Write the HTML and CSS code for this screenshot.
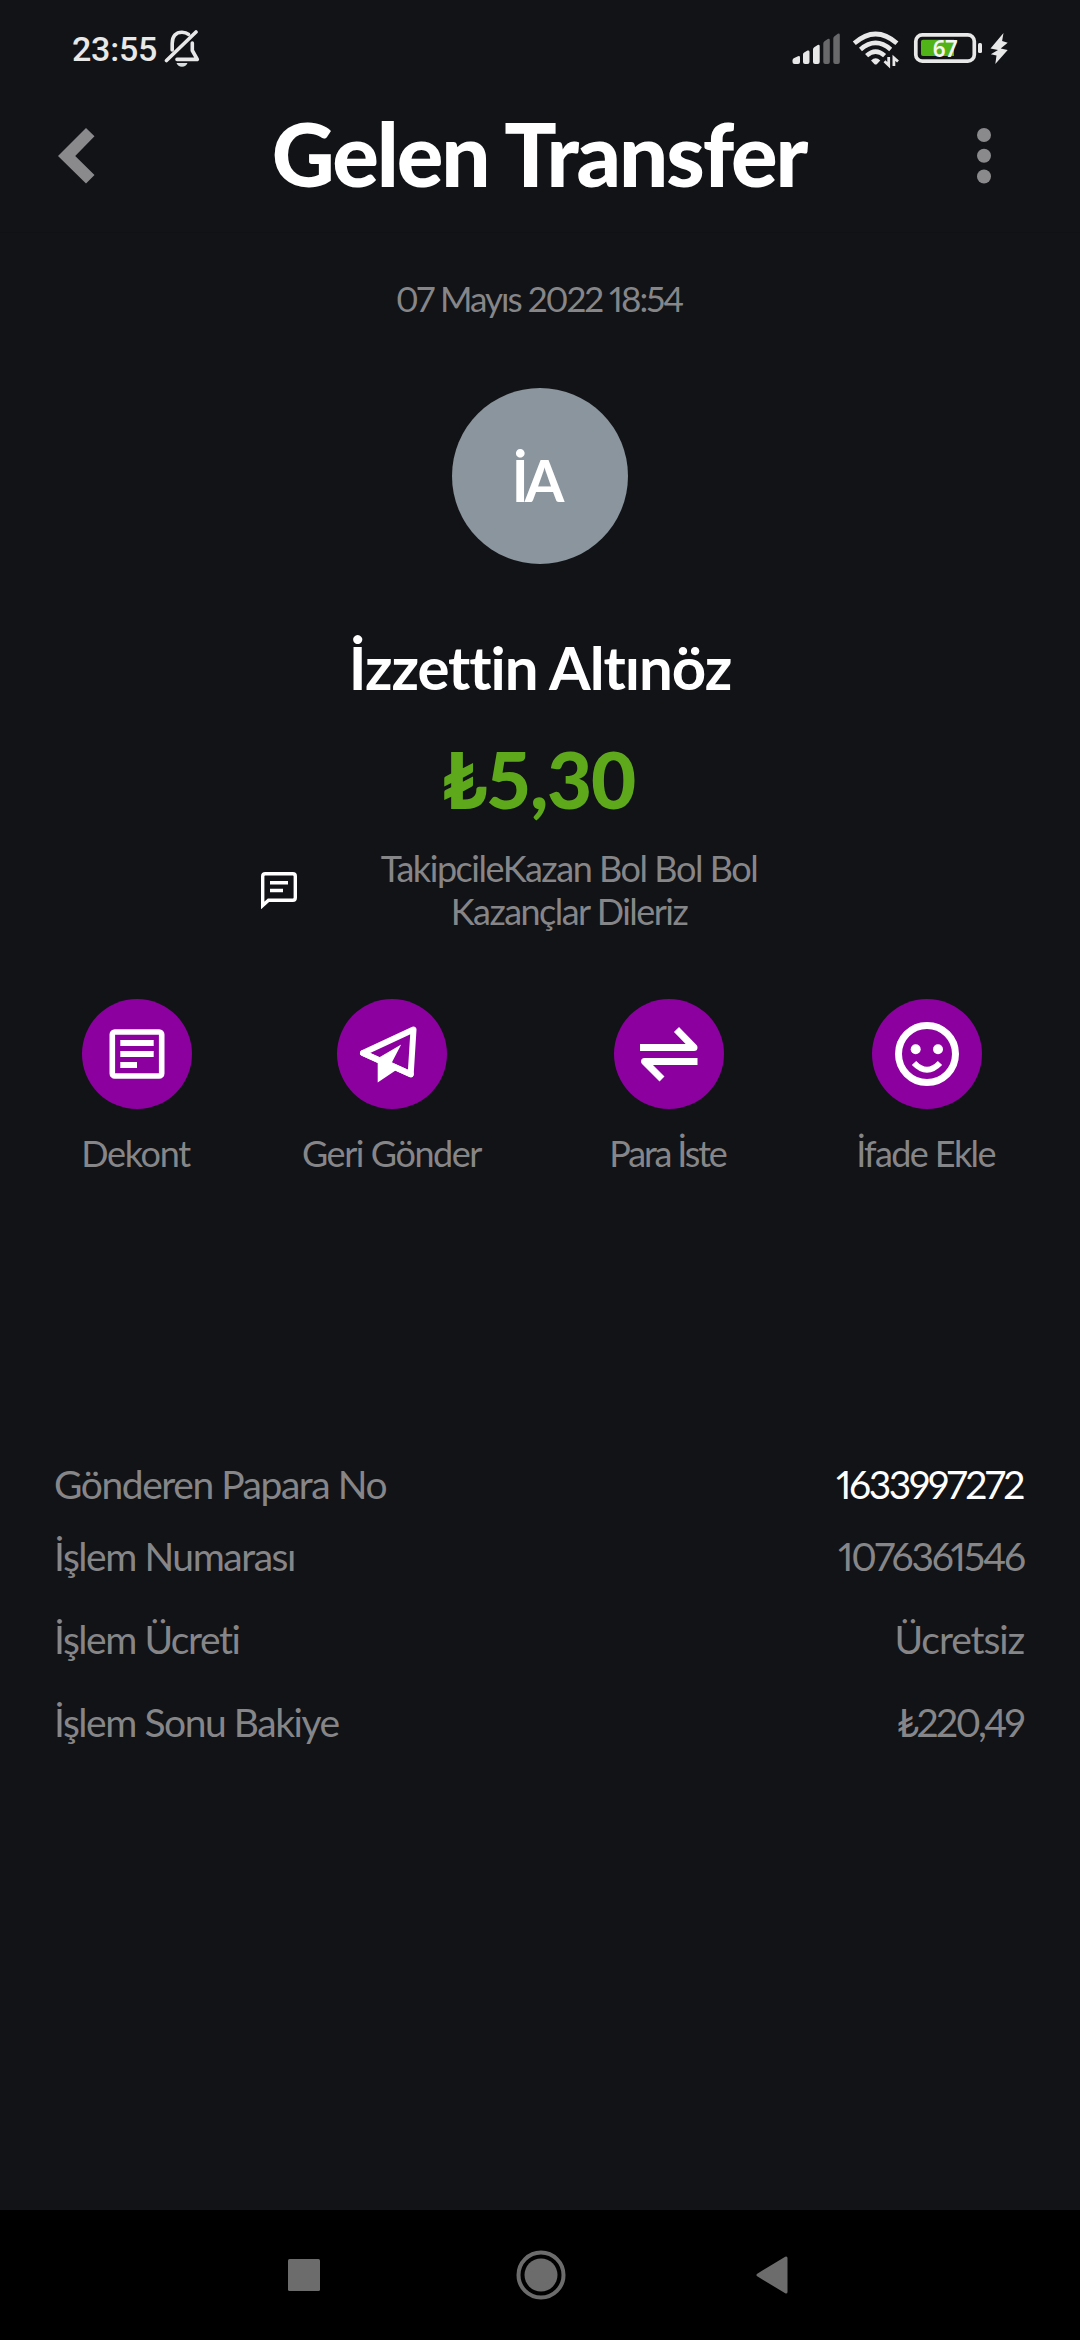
FILE: index.html
```html
<!DOCTYPE html>
<html lang="tr">
<head>
<meta charset="utf-8">
<title>Gelen Transfer</title>
<link rel="stylesheet" href="styles.css">
</head>
<body>
<div class="screen">
  <div class="status">
    <div class="status-left">
      <span class="clock">23:55</span>
      <svg class="bell" width="36" height="40" viewBox="0 0 36 40" fill="none" stroke="#e8e8e8" stroke-width="3.6" stroke-linecap="round">
        <path d="M8.2 21V14.5C8.200 7 12 3.200 18 3.200c2.600 0 4.900.7 6.600 2.200"/>
        <path d="M28.300 14v7.500l5 8.900H13" stroke-linejoin="round"/>
        <path d="M2.500 31.500 32 3"/>
        <path d="M12.500 34h11c-.8 2.400-2.800 3.800-5.500 3.800s-4.700-1.400-5.500-3.800z" fill="#d8dedd" stroke="none"/>
      </svg>
    </div>
    <svg class="status-right" width="220" height="40" viewBox="790 29 220 40">
      <g fill="#e8e8e8">
        <path d="M792.500 60.500q0-1.500 1.200-2.200l4.300-2.100q2-.7 2 1.300v4.500q0 2-2 2h-3.500q-2 0-2-2z"/>
        <path d="M803 54.500q0-1.500 1.200-2l3.300-1.900q2-.7 2 1.300V62q0 2-2 2H805q-2 0-2-2z"/>
        <path d="M813 49.500q0-1.500 1.200-2.200l3.500-2.300q2-.7 2 1.300V62q0 2-2 2H815q-2 0-2-2z"/>
      </g>
      <g fill="#69696b">
        <path d="M823.300 43.500q0-1.500 1.200-2.200l3.300-2.300q2-.7 2 1.300V62q0 2-2 2h-2.500q-2 0-2-2z"/>
        <path d="M833.300 38.500q0-1.500 1.200-2.200l3.300-2.600q2-.7 2 1.300V62q0 2-2 2h-2.500q-2 0-2-2z"/>
      </g>
      <g fill="none" stroke="#e8e8e8" stroke-width="4.600">
        <path d="M854.300 43.300q21.300-18.600 42.600 0"/>
        <path d="M860.500 49.400q15.100-13 30.200 0"/>
        <path d="M866.600 55.600q9-8 18 0"/>
      </g>
      <path d="M871 60.500q4.700-4.500 9.300 0l-3.300 3.600q-1.400 1-2.700 0z" fill="#e8e8e8"/>
      <path d="M884.500 61.200 888.700 65.200V57M898 61.500 893.900 57.800V66" fill="none" stroke="#e8e8e8" stroke-width="2.800"/>
      <rect x="915.800" y="34.800" width="58.500" height="26.400" rx="6.500" fill="none" stroke="#e8e8e8" stroke-width="3.700"/>
      <path d="M923 39.700h31V56h-31q-2 0-2-2V41.700q0-2 2-2z" fill="#50b418"/>
      <rect x="978" y="43" width="4" height="10" rx="1.500" fill="#e8e8e8"/>
      <text class="battery-level" x="945" y="57">67</text>
      <path d="M1003.500 33l-13 15.500 7.500 1.500-7.200 4.200 5.700 1.200-1.200 8.600 12.400-14-7-1.500 7-5.800-5.600-1.700z" fill="#e8e8e8"/>
    </svg>
  </div>

  <div class="header">
    <svg class="back" width="37" height="56" viewBox="0 0 37 56"><path d="M0 28 28 0l8.500 8.300L17.200 28l19.300 19-8.500 8.500z" fill="#8a8a8d"/></svg>
    <h1 class="title">Gelen Transfer</h1>
    <svg class="more" width="14" height="56" viewBox="0 0 14 56" fill="#8a8a8d"><circle cx="7" cy="7" r="7"/><circle cx="7" cy="27.800" r="7"/><circle cx="7" cy="48.500" r="7"/></svg>
  </div>

  <div class="summary">
    <div class="date">07 Mayıs 2022 18:54</div>
    <div class="avatar"><span class="initials">İA</span></div>
    <div class="name">İzzettin Altınöz</div>
    <div class="amount">₺5,30</div>
    <div class="note">
      <svg class="note-icon" width="36" height="37" viewBox="0 0 36 37"><path d="M1.700 33.500V4.200q0-2.500 2.500-2.500h27.600q2.500 0 2.500 2.500v21.600q0 2.500-2.500 2.500H7.500z" fill="none" stroke="#fff" stroke-width="3.400"/><path d="M9 10.700h18M9 18.500h13" stroke="#fff" stroke-width="3.400"/></svg>
      <div class="note-text"><span class="note-a">TakipcileKazan Bol Bol Bol</span><span class="note-b">Kazançlar Dileriz</span></div>
    </div>
  </div>

  <div class="actions">
    <div class="action">
      <div class="disc"><svg width="110" height="110" viewBox="0 0 110 110"><rect x="30.300" y="33" width="49.400" height="44" rx="2.500" fill="none" stroke="#fff" stroke-width="5.600"/><path d="M38.300 44h33.400M38.300 55h33.400M38.300 66h16.700" stroke="#fff" stroke-width="5.800"/></svg></div>
      <span class="label l1">Dekont</span>
    </div>
    <div class="action">
      <div class="disc"><svg width="110" height="110" viewBox="0 0 110 110"><path d="M26 54 76.500 30.500 73.700 75.200z" fill="none" stroke="#fff" stroke-width="6" stroke-linejoin="round"/><path d="M49 70.500 41 63l-2-1 3-2 22-14-9 17.500L67 70z" fill="#8b009f"/><path d="M64.200 45.500 40.700 59.300V83.500L58.500 71.600 54.700 63.700z" fill="#fff"/><path d="M26 54l18 8.200M53 65.800l20.700 9.400" stroke="#fff" stroke-width="6" stroke-linecap="round"/></svg></div>
      <span class="label l2">Geri Gönder</span>
    </div>
    <div class="action">
      <div class="disc"><svg width="110" height="110" viewBox="0 0 110 110" fill="none" stroke="#fff" stroke-width="7" stroke-linejoin="round"><path d="M26 48.500h54L62.500 30.500M83.500 62.500H30.500L48 80"/></svg></div>
      <span class="label l3">Para İste</span>
    </div>
    <div class="action">
      <div class="disc"><svg width="110" height="110" viewBox="0 0 110 110"><circle cx="55" cy="55" r="28.500" fill="none" stroke="#fff" stroke-width="7"/><circle cx="43.700" cy="50.300" r="5" fill="#fff"/><circle cx="66" cy="50.300" r="5" fill="#fff"/><path d="M42 64q13 13.500 26 0" fill="none" stroke="#fff" stroke-width="6"/></svg></div>
      <span class="label l4">İfade Ekle</span>
    </div>
  </div>

  <div class="details">
    <div class="row first"><span>Gönderen Papara No</span><span class="v1">1633997272</span></div>
    <div class="row"><span>İşlem Numarası</span><span class="v2">1076361546</span></div>
    <div class="row"><span>İşlem Ücreti</span><span class="v3">Ücretsiz</span></div>
    <div class="row"><span>İşlem Sonu Bakiye</span><span class="v4">₺220,49</span></div>
  </div>

  <div class="navbar">
    <svg width="32" height="32" viewBox="0 0 32 32"><rect width="32" height="32" rx="1.500" fill="#6c6c6c"/></svg>
    <svg class="home" width="50" height="50" viewBox="0 0 50 50"><circle cx="25" cy="25" r="22.500" fill="none" stroke="#6c6c6c" stroke-width="4"/><circle cx="25" cy="25" r="16.500" fill="#6c6c6c"/></svg>
    <svg width="32" height="38" viewBox="0 0 32 38"><path d="M2 19 30 2v34z" fill="#6c6c6c" stroke="#6c6c6c" stroke-width="3" stroke-linejoin="round"/></svg>
  </div>
</div>
</body>
</html>
```
FILE: styles.css
```css
* { box-sizing: border-box; }
body { margin: 0; background: #121317; font-family: Lato, "Noto Sans", sans-serif; font-variant-ligatures: none; color: #fff; }
svg { display: block; flex: none; }
.screen { width: 1080px; height: 2340px; display: flex; flex-direction: column; white-space: nowrap; }

.status { height: 86px; padding: 29px 70px 0 72px; display: flex; justify-content: space-between; }
.status-left { display: flex; }
.clock { width: 92px; font: 500 34px/40px Roboto, sans-serif; letter-spacing: -0.24px; color: #e8e8e8; }
.battery-level { font: 600 22.5px "Noto Sans", sans-serif; letter-spacing: -0.5px; fill: #f4f4f4; text-anchor: middle; }

.header { height: 146px; padding: 0 89px 6px 58px; display: grid; grid-template-columns: 37px 1fr 14px; align-items: center; }
.title { margin: 0; padding: 0 0 4px 6px; text-align: center; font-size: 87px; line-height: 100px; font-weight: 900; letter-spacing: -2.1px; }

.summary { height: 767px; padding-top: 43px; border-top: 1px solid #101115; display: flex; flex-direction: column; align-items: center; }
.date { padding-right: 2px; font-size: 35px; line-height: 44px; letter-spacing: -2px; color: #868689; font-feature-settings: "pnum"; }
.avatar { width: 176px; height: 176px; margin-top: 68px; border-radius: 50%; background: #8b959d; display: flex; justify-content: center; padding-top: 62px; }
.initials { margin-right: 8px; font-size: 57px; line-height: 60px; font-weight: 700; letter-spacing: -4px; }
.name { margin-top: 67px; font-size: 60px; line-height: 72px; font-weight: 700; letter-spacing: -1.05px; }
.amount { margin-top: 31px; padding-right: 3px; font-size: 78px; line-height: 90px; font-weight: 900; letter-spacing: -1.3px; color: #5ea81c; }
.note { width: 1080px; margin-top: 23px; padding-left: 261px; display: flex; align-items: center; }
.note-text { width: 544px; display: flex; flex-direction: column; align-items: center; font-size: 36px; line-height: 43px; color: #868689; }
.note-a { letter-spacing: -1.45px; }
.note-b { letter-spacing: -1.52px; }

.actions { height: 461px; display: grid; grid-template-columns: 274px 236px 318px 198px; }
.action { display: flex; flex-direction: column; align-items: center; gap: 22px; }
.disc { border-radius: 50%; background: #8b009f; }
.label { margin-right: 3px; font-size: 36px; line-height: 44px; color: #868689; }
.l1 { letter-spacing: -1.3px; }
.l2 { margin-right: 1px; letter-spacing: -1.44px; }
.l3 { letter-spacing: -2.15px; }
.l4 { letter-spacing: -1.6px; }

.details { flex: 1; padding: 0 56px 0 54px; }
.row { height: 83px; display: flex; justify-content: space-between; font-size: 39px; line-height: 48px; color: #868689; font-feature-settings: "pnum"; letter-spacing: -1.45px; }
.row.first { height: 72px; }
.v1 { margin-right: 1px; color: #fff; letter-spacing: -2.35px; }
.v2 { letter-spacing: -2.15px; }
.v3 { letter-spacing: -1.1px; }
.v4 { margin-right: 1px; letter-spacing: -2.7px; }

.navbar { height: 130px; background: #000; display: flex; align-items: center; justify-content: space-between; padding: 0 292px 0 288px; }
.home { margin-left: 5px; }
```
